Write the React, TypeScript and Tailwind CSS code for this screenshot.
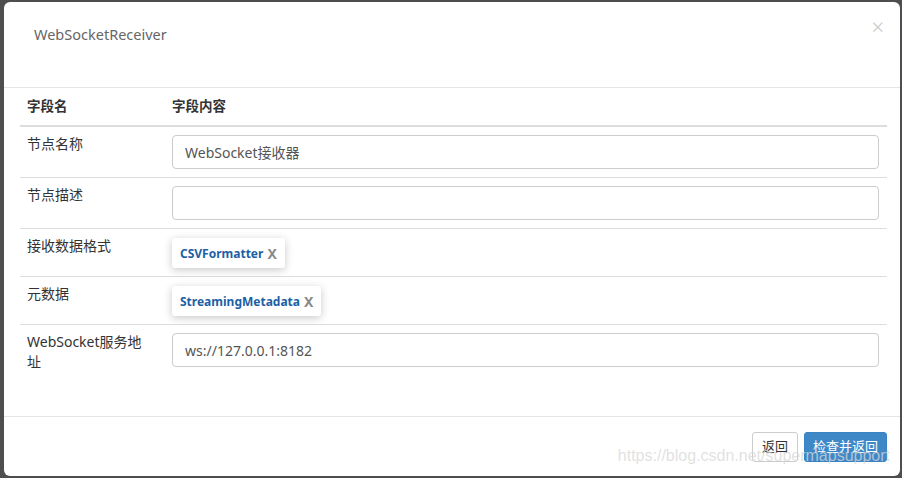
import { useState } from 'react';

interface FieldRow {
  label: string;
  kind: 'input' | 'tag';
  value: string;
}

const rows: FieldRow[] = [
  { label: '节点名称', kind: 'input', value: 'WebSocket接收器' },
  { label: '节点描述', kind: 'input', value: '' },
  { label: '接收数据格式', kind: 'tag', value: 'CSVFormatter' },
  { label: '元数据', kind: 'tag', value: 'StreamingMetadata' },
  { label: 'WebSocket服务地址', kind: 'input', value: 'ws://127.0.0.1:8182' },
];

const font = { fontFamily: '"Noto Sans", "Noto Sans CJK SC", sans-serif' };

export default function App() {
  const [values, setValues] = useState<string[]>(rows.map(r => r.value));

  return (
    <div className="w-[902px] h-[478px] bg-[#4e4e4e] pl-[4px] pt-[2px] pr-[2px] pb-[2px] overflow-hidden" style={font}>
      <div className="relative h-full bg-white rounded-[6px] flex flex-col">
        {/* Header */}
        <div className="h-[86px] border-b border-[#e5e5e5] flex items-start justify-between pl-[30px] pr-[16px] pt-[21px]">
          <h4 className="text-[14.5px] text-[#666] leading-[22px]">WebSocketReceiver</h4>
          <button className="text-[22px] leading-[22px] text-[#c8c8c8] font-light -mt-[8px]">×</button>
        </div>

        {/* Body */}
        <div className="flex-1 px-[16px]">
          <table className="w-[867px] border-collapse text-[14px] text-[#333]">
            <thead>
              <tr className="border-b-2 border-[#ddd]">
                <th className="w-[144px] text-left text-[13.5px] font-bold px-[7px] pt-[8px] pb-[9px] leading-[20px]">字段名</th>
                <th className="text-left text-[13.5px] font-bold px-[8px] pt-[8px] pb-[9px] leading-[20px]">字段内容</th>
              </tr>
            </thead>
            <tbody>
              {rows.map((row, i) => (
                <tr key={row.label} className={i < rows.length - 1 ? 'border-b border-[#ddd]' : ''}>
                  <td className="align-top pl-[7px] pr-[18px] pt-[7px] pb-[8px] leading-[20px]">{row.label}</td>
                  {row.kind === 'input' ? (
                    <td className="align-top px-[8px] pt-[8px] pb-[8px]">
                      <input
                        value={values[i]}
                        onChange={e => setValues(prev => prev.map((v, j) => (j === i ? e.target.value : v)))}
                        className="block w-full h-[34px] border border-[#ccc] rounded-[4px] px-[12px] text-[14px] text-[#555] outline-none"
                      />
                    </td>
                  ) : (
                    <td className="align-top px-[8px] pt-[9px] pb-[8px]">
                      <div className="flex">
                        <span className="flex items-center h-[30px] px-[8px] pt-[1px] bg-white rounded-[3px] shadow-[0_2px_8px_rgba(0,0,0,0.22)]">
                          <span className="text-[12px] font-bold text-[#1c5fa5]">{row.value}</span>
                          <span className="ml-[4px] text-[14px] font-bold text-[#8a8a8a]">X</span>
                        </span>
                      </div>
                    </td>
                  )}
                </tr>
              ))}
            </tbody>
          </table>
        </div>

        {/* Footer */}
        <div className="h-[60px] border-t border-[#e5e5e5] flex justify-end items-start gap-[6px] pt-[15px] pr-[13px]">
          <button className="h-[30px] px-[9px] border border-[#ccc] rounded-[3px] bg-white text-[13px] text-[#333]">返回</button>
          <button className="h-[30px] px-[8px] border border-[#3a83c3] rounded-[3px] bg-[#3f88c8] text-[13px] text-white">检查并返回</button>
        </div>

        {/* Watermark */}
        <div
          className="absolute right-[10px] bottom-[8px] text-[16px] text-[rgba(215,215,215,0.75)] pointer-events-none"
          style={{ fontFamily: '"Liberation Sans", Arial, sans-serif' }}
        >
          https://blog.csdn.net/supermapsupport
        </div>
      </div>
    </div>
  );
}
